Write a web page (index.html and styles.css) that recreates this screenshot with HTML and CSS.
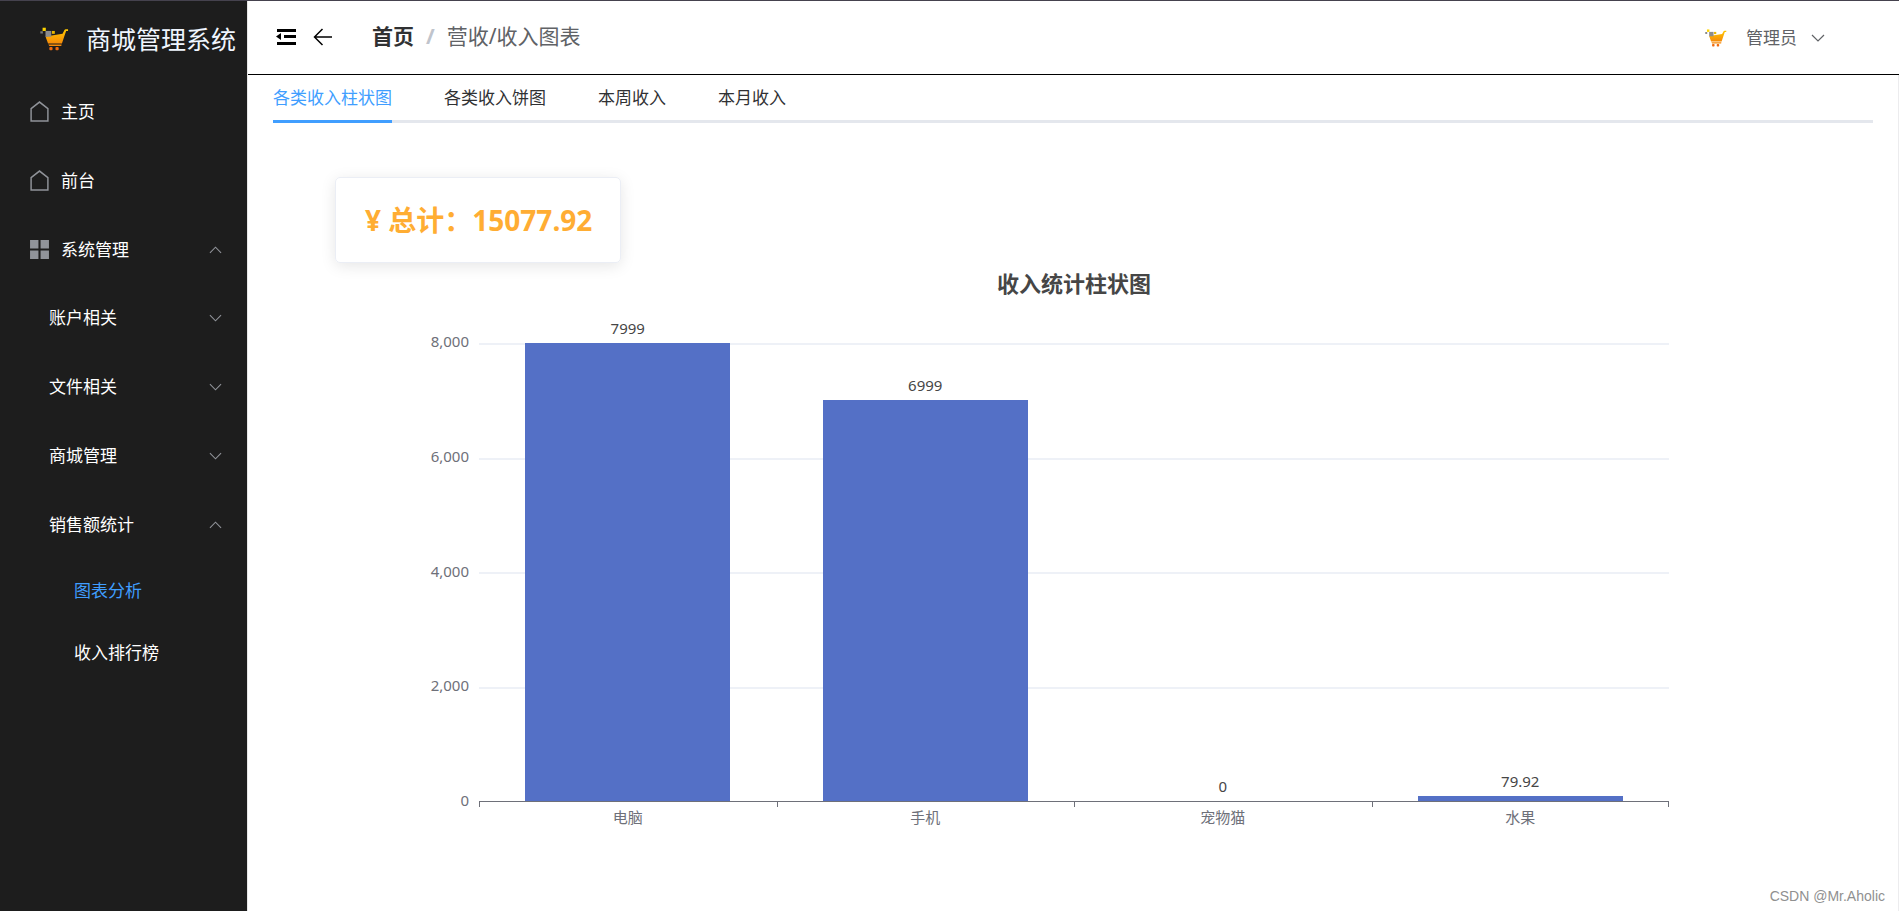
FILE: index.html
```html
<!DOCTYPE html>
<html lang="zh-CN">
<head>
<meta charset="utf-8">
<title>商城管理系统</title>
<link rel="stylesheet" href="styles.css">
</head>
<body>
<svg class="defs" aria-hidden="true">
  <defs>
    <linearGradient id="cart-fill" x1="0" y1="0" x2="0" y2="1">
      <stop offset="0" stop-color="#ffc800"/><stop offset="1" stop-color="#f58a0a"/>
    </linearGradient>
    <symbol id="cart" viewBox="0 0 90 72">
      <rect x="8" y="1" width="10" height="10" fill="#ffd500"/>
      <rect x="1" y="12" width="8" height="7" fill="#777"/>
      <rect x="37" y="11" width="9" height="9" fill="#e8b800"/>
      <path d="M17 28 L70 20 L76 8 Q77 6 80 6 H87 V11 H81 L68 50 H25 Z" fill="url(#cart-fill)"/>
      <rect x="17" y="11" width="18" height="18" fill="#8c8c8c"/>
      <path d="M26 53 H67 L66 58 H29 Z" fill="#f58a0a"/>
      <rect x="29" y="61" width="10" height="10" rx="3" fill="#ee6a10"/>
      <rect x="48" y="61" width="10" height="10" rx="3" fill="#ee6a10"/>
    </symbol>
    <symbol id="house" viewBox="0 0 18 20"><path d="M1 7.200 L9 1 L17 7.200 V19 H1 Z" fill="none" stroke="currentColor" stroke-width="1.400"/></symbol>
    <symbol id="down" viewBox="0 0 14 8"><path d="M1 1 L7 7 L13 1" fill="none" stroke="currentColor" stroke-width="1.200"/></symbol>
    <symbol id="up" viewBox="0 0 14 8"><path d="M1 7 L7 1 L13 7" fill="none" stroke="currentColor" stroke-width="1.200"/></symbol>
  </defs>
</svg>
<div class="app">
  <aside class="sidebar">
    <div class="brand"><svg class="brand-logo"><use href="#cart"/></svg><span>商城管理系统</span></div>
    <nav class="menu">
      <a class="item" href="#"><svg class="item-icon"><use href="#house"/></svg>主页</a>
      <a class="item" href="#"><svg class="item-icon"><use href="#house"/></svg>前台</a>
      <button class="item" type="button"><svg class="item-icon" viewBox="0 0 18 20"><path d="M0 1h8v8H0zM10 1h8v8h-8zM0 11h8v8H0zM10 11h8v8h-8z" fill="currentColor"/></svg>系统管理<svg class="arrow"><use href="#up"/></svg></button>
      <button class="item sub" type="button">账户相关<svg class="arrow"><use href="#down"/></svg></button>
      <button class="item sub" type="button">文件相关<svg class="arrow"><use href="#down"/></svg></button>
      <button class="item sub" type="button">商城管理<svg class="arrow"><use href="#down"/></svg></button>
      <button class="item sub" type="button">销售额统计<svg class="arrow"><use href="#up"/></svg></button>
      <a class="item leaf active" href="#">图表分析</a>
      <a class="item leaf" href="#">收入排行榜</a>
    </nav>
  </aside>
  <div class="page">
    <header class="header">
      <button class="tool" type="button" aria-label="折叠菜单"><svg viewBox="0 0 20 18"><path d="M1 1h19v3H1zM8 7h12v3H8zM1 14h19v3H1zM0 8.500l5-3.500v7z"/></svg></button>
      <button class="tool" type="button" aria-label="返回"><svg viewBox="0 0 20 18"><path d="M9.500 1L1.500 9l8 8M1.500 9H19" fill="none" stroke="#000" stroke-width="1.500"/></svg></button>
      <nav class="crumbs"><a href="#">首页</a><span class="slash">/</span><span>营收/收入图表</span></nav>
      <button class="user" type="button"><svg class="avatar"><use href="#cart"/></svg>管理员<svg class="user-arrow"><use href="#down"/></svg></button>
    </header>
    <main class="content">
      <nav class="tabs">
        <button class="tab active" type="button">各类收入柱状图</button>
        <button class="tab" type="button">各类收入饼图</button>
        <button class="tab" type="button">本周收入</button>
        <button class="tab" type="button">本月收入</button>
      </nav>
      <div class="total">¥ 总计：15077.92</div>
      <section class="chart">
        <h2>收入统计柱状图</h2>
        <div class="y-axis"><span>8,000</span><span>6,000</span><span>4,000</span><span>2,000</span><span>0</span></div>
        <div class="lines"><i></i><i></i><i></i><i></i></div>
        <div class="bars">
          <div class="col"><span>7999</span><div class="bar" style="height:99.99%"></div></div>
          <div class="col"><span>6999</span><div class="bar" style="height:87.49%"></div></div>
          <div class="col"><span>0</span><div class="bar" style="height:0%"></div></div>
          <div class="col"><span>79.92</span><div class="bar" style="height:1%"></div></div>
        </div>
        <div class="x-axis"><span>电脑</span><span>手机</span><span>宠物猫</span><span>水果</span></div>
      </section>
      <footer class="credit">CSDN @Mr.Aholic</footer>
    </main>
  </div>
</div>
</body>
</html>
```
FILE: styles.css
```css
* { box-sizing: border-box; }
body { margin: 0; font-family: "Noto Sans", "Noto Sans CJK SC", sans-serif; font-size: 17px; line-height: 24px; color: #303133; background: #fff; }
button { font: inherit; color: inherit; background: none; border: 0; padding: 0; text-align: left; cursor: pointer; }
a { color: inherit; text-decoration: none; }
svg { flex: none; }
.defs { position: absolute; width: 0; height: 0; }

.app { display: flex; min-height: 100vh; border-top: 1px solid #45424e; }
.sidebar { width: 248px; flex: none; background: #1d1d1d; border-right: 1px solid #e6e6e6; color: #fff; }
.brand { display: flex; align-items: center; gap: 17px; height: 76px; padding-left: 40px; font-size: 25px; white-space: nowrap; color: #f0f6ff; }
.brand-logo { width: 29px; height: 24px; }
.menu { display: flex; flex-direction: column; }
.item { display: flex; align-items: center; height: 69px; padding: 0 25px 0 30px; }
.item-icon { width: 19px; height: 21px; margin-right: 12px; color: #909399; }
.sub { padding-left: 49px; padding-bottom: 2px; }
.leaf { height: 62px; padding-left: 74px; }
.item.active { color: #409eff; }
.arrow { width: 13px; height: 8px; margin-left: auto; color: #909399; }

.page { flex: 1; min-width: 0; display: flex; flex-direction: column; }
.header { display: flex; align-items: center; height: 74px; padding: 0 74px 2px 28px; border-bottom: 1px solid #000; }
.tool { display: flex; margin-right: 17px; }
.tool svg { width: 20px; height: 18px; }
.crumbs { display: flex; gap: 12px; margin-left: 22px; padding-bottom: 2px; font-size: 21px; color: #606266; }
.crumbs a { font-weight: 700; color: #303133; }
.slash { font-weight: 700; color: #c0c4cc; }
.user { display: flex; align-items: center; margin-left: auto; padding-top: 2px; color: #606266; }
.avatar { width: 22px; height: 18px; margin-right: 19px; }
.user-arrow { width: 14px; height: 8px; margin-left: 14px; }

.content { flex: 1; display: flex; flex-direction: column; padding: 0 25px; border-right: 1px solid #ececee; }
.tabs { display: flex; gap: 52px; height: 48px; border-bottom: 3px solid #e4e7ed; }
.tab { height: 48px; border-bottom: 3px solid transparent; }
.tab.active { color: #409eff; border-color: #409eff; }
.total { align-self: flex-start; margin: 54px 0 0 62px; padding: 24px 28px 24px 29px; font-size: 28px; line-height: 36px; font-weight: 700; color: #ffad33; border: 1px solid #ebeef5; border-radius: 5px; box-shadow: 0 3px 15px rgba(0, 0, 0, .1); }

.chart { display: grid; grid-template-columns: 60px 1fr; grid-template-rows: 80px 458px auto; column-gap: 10px; margin: 0 204px 0 136px; font-size: 15px; line-height: 20px; }
.chart h2 { grid-column: 2; margin: 5px 0 0; font-size: 22px; line-height: 30px; text-align: center; color: #464646; }
.y-axis { grid-area: 2 / 1; display: flex; flex-direction: column; justify-content: space-between; margin: -12px 0 -9px; text-align: right; color: #6e7079; }
.lines { grid-area: 2 / 2; display: flex; flex-direction: column; }
.lines i { flex: 1; border-top: 2px solid #eef1f7; }
.bars { grid-area: 2 / 2; display: grid; grid-template-columns: repeat(4, 1fr); }
.col { display: flex; flex-direction: column; justify-content: flex-end; align-items: center; min-height: 0; color: #464646; }
.col span { margin: -25px 0 5px; }
.bar { flex: none; width: 69%; background: #5470c6; }
.x-axis { grid-area: 3 / 2; display: grid; grid-template-columns: repeat(4, 1fr); border-top: 1px solid #6e7079; text-align: center; color: #6e7079; }
.x-axis span { padding-top: 5px; background: linear-gradient(#6e7079, #6e7079) 0 0 / 1px 5px no-repeat; }
.x-axis span:last-child { background: linear-gradient(#6e7079, #6e7079) 0 0 / 1px 5px no-repeat, linear-gradient(#6e7079, #6e7079) 100% 0 / 1px 5px no-repeat; }
.credit { margin: auto -12px 3px auto; font-family: "Liberation Sans", sans-serif; font-size: 14px; color: #909090; }
```
